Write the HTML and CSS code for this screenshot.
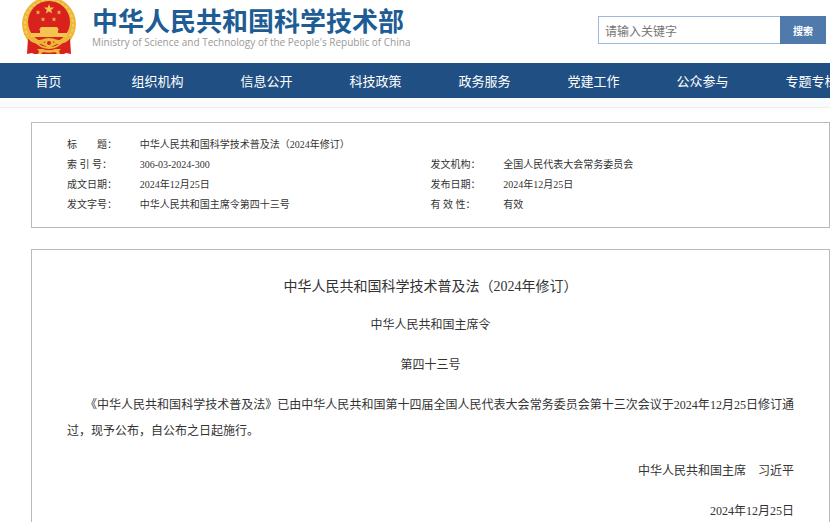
FILE: index.html
```html
<!DOCTYPE html>
<html lang="zh-CN">
<head>
<meta charset="utf-8">
<title>中华人民共和国科学技术部</title>
<link rel="stylesheet" href="styles.css">
</head>
<body>
<header class="header">
  <a class="brand" href="#">
    <svg class="emblem" viewBox="0 0 56 56" aria-hidden="true">
      <circle cx="28" cy="24" r="27" fill="#edb73c"/>
      <circle cx="28" cy="24" r="24" fill="none" stroke="#f6cb58" stroke-width="2" stroke-dasharray="3 2"/>
      <path fill="#d9211d" d="M7 38c3 4 8 6 13 6l8 4 8-4c5 0 10-2 13-6l1 16-5-1-2 1H13l-2-1-5 1z"/>
      <circle cx="28" cy="22" r="21" fill="#d9211d"/>
      <path fill="#f3c24b" d="m28 4 1.300 3.600h3.900l-3.100 2.300 1.200 3.700-3.300-2.200-3.300 2.200 1.200-3.700-3.100-2.300h3.900z"/>
      <g fill="#efb644">
        <path id="star" d="m17 10 .7 1.600h1.700L18 12.700l.5 1.700-1.500-1-1.500 1 .5-1.700-1.400-1.100h1.700z"/>
        <use href="#star" x="21"/>
        <use href="#star" x="5" y="7"/>
        <use href="#star" x="16" y="7"/>
      </g>
      <path fill="#f3c450" d="M20 27h16l2 3H18zM19 30h18v3h9v4H10v-4h9z"/>
      <path fill="none" stroke="#edb73c" stroke-width="3" d="M7 36c4 6 9 7 14 5 4-2 10-2 14 0 5 2 10 1 14-5"/>
      <path fill="none" stroke="#edb73c" stroke-width="2" d="M15 42c4 5 8 6 13 6s9-1 13-6"/>
      <circle cx="28" cy="43" r="3" fill="#d9211d" stroke="#edb73c" stroke-width="2"/>
      <path fill="#edb73c" d="M16 49h6c2 1 3 1 6 1s4 0 6-1h6l-2 2 1 3h-3l-2-2c-4 1-8 1-12 0l-2 2h-3l1-3z"/>
    </svg>
    <span class="brand-text">
      <strong class="brand-name">中华人民共和国科学技术部</strong>
      <span class="brand-en" lang="en">Ministry of Science and Technology of the People's Republic of China</span>
    </span>
  </a>
  <form class="search">
    <input class="search-input" type="text" placeholder="请输入关键字" aria-label="请输入关键字">
    <button class="search-button" type="button">搜索</button>
  </form>
</header>
<nav class="nav">
  <ul class="nav-list">
    <li><a href="#">首页</a></li>
    <li><a href="#">组织机构</a></li>
    <li><a href="#">信息公开</a></li>
    <li><a href="#">科技政策</a></li>
    <li><a href="#">政务服务</a></li>
    <li><a href="#">党建工作</a></li>
    <li><a href="#">公众参与</a></li>
    <li><a href="#">专题专栏</a></li>
  </ul>
</nav>
<div class="nav-shade"></div>
<main class="main">
  <section class="panel meta">
    <table class="meta-table">
      <colgroup>
        <col class="col-label"><col class="col-value"><col class="col-label"><col class="col-value">
      </colgroup>
      <tr><th scope="row">标　　题：</th><td colspan="3">中华人民共和国科学技术普及法（2024年修订）</td></tr>
      <tr><th scope="row">索 引 号：</th><td>306-03-2024-300</td><th scope="row">发文机构：</th><td>全国人民代表大会常务委员会</td></tr>
      <tr><th scope="row">成文日期：</th><td>2024年12月25日</td><th scope="row">发布日期：</th><td>2024年12月25日</td></tr>
      <tr><th scope="row">发文字号：</th><td>中华人民共和国主席令第四十三号</td><th scope="row">有 效 性：</th><td>有效</td></tr>
    </table>
  </section>
  <article class="panel article">
    <h1 class="article-title">中华人民共和国科学技术普及法（2024年修订）</h1>
    <p class="center">中华人民共和国主席令</p>
    <p class="center">第四十三号</p>
    <p class="body-text">《中华人民共和国科学技术普及法》已由中华人民共和国第十四届全国人民代表大会常务委员会第十三次会议于2024年12月25日修订通过，现予公布，自公布之日起施行。</p>
    <p class="signature">中华人民共和国主席　习近平</p>
    <p class="signature">2024年12月25日</p>
  </article>
</main>
</body>
</html>
```

FILE: styles.css
```css
* {
  box-sizing: border-box;
}

body {
  margin: 0;
  min-height: 100vh;
  display: flex;
  flex-direction: column;
  background: #fff;
  color: #333;
  font-family: "Liberation Serif", "Noto Sans CJK SC", serif;
  font-size: 12px;
  overflow-x: hidden;
}

.header {
  display: flex;
  justify-content: space-between;
  align-items: flex-start;
  height: 63px;
  padding: 0 4px 0 21px;
}

.brand {
  display: flex;
  gap: 15px;
  color: #205c94;
  text-decoration: none;
}

.emblem {
  width: 56px;
  height: 56px;
}

.brand-text {
  display: flex;
  flex-direction: column;
  padding-top: 4px;
  white-space: nowrap;
}

.brand-name {
  font: bold 26px/32px "Noto Sans CJK SC", sans-serif;
}

.brand-en {
  color: #999;
  font: 10px/12px "Open Sans", sans-serif;
}

.search {
  display: flex;
  width: 228px;
  height: 28px;
  margin-top: 16px;
}

.search-input {
  flex: 1;
  min-width: 0;
  padding: 0 6px;
  border: 1px solid #9bb9da;
  border-right: 0;
  font: 12px "Noto Sans CJK SC", sans-serif;
}

.search-input::placeholder {
  color: #757575;
}

.search-button {
  width: 46px;
  padding: 0;
  border: 0;
  background: #4f7aab;
  color: #fff;
  font: bold 10px "Noto Sans CJK SC", sans-serif;
}

.nav {
  background: #205083;
  overflow: hidden;
}

.nav-list {
  display: flex;
  margin: 0 0 0 -6px;
  padding: 0;
  list-style: none;
}

.nav-list li {
  flex: 0 0 109px;
}

.nav-list a {
  display: block;
  padding-top: 2px;
  color: #fff;
  font-size: 13px;
  line-height: 33px;
  text-align: center;
  text-decoration: none;
}

.nav-shade {
  height: 10px;
  background: #fafbfd;
  border-bottom: 1px solid #eee;
}

.main {
  flex: 1;
  display: flex;
  flex-direction: column;
  gap: 21px;
  padding: 14px 0 0 31px;
}

.panel {
  border: 1px solid #bbb;
}

.meta {
  padding: 12px 35px;
}

.meta-table {
  width: 100%;
  table-layout: fixed;
  border-collapse: collapse;
  font-size: 10px;
  line-height: 20px;
}

.col-label {
  width: 10%;
}

.col-value {
  width: 40%;
}

.meta-table th,
.meta-table td {
  padding: 0;
  font-weight: normal;
  text-align: left;
}

.meta-table th {
  white-space: pre;
}

.article {
  flex: 1;
  padding: 24px 35px 0;
  border-bottom: 0;
}

.article-title {
  margin: 0 0 12px;
  font-size: 14px;
  font-weight: normal;
  line-height: 26px;
  text-align: center;
}

.article p {
  margin: 0 0 14px;
  line-height: 26px;
}

.article p:last-child {
  margin-bottom: 0;
}

.center {
  text-align: center;
}

.article .body-text {
  text-indent: 18px;
  text-align: justify;
}

.article .signature {
  text-align: right;
}
```
